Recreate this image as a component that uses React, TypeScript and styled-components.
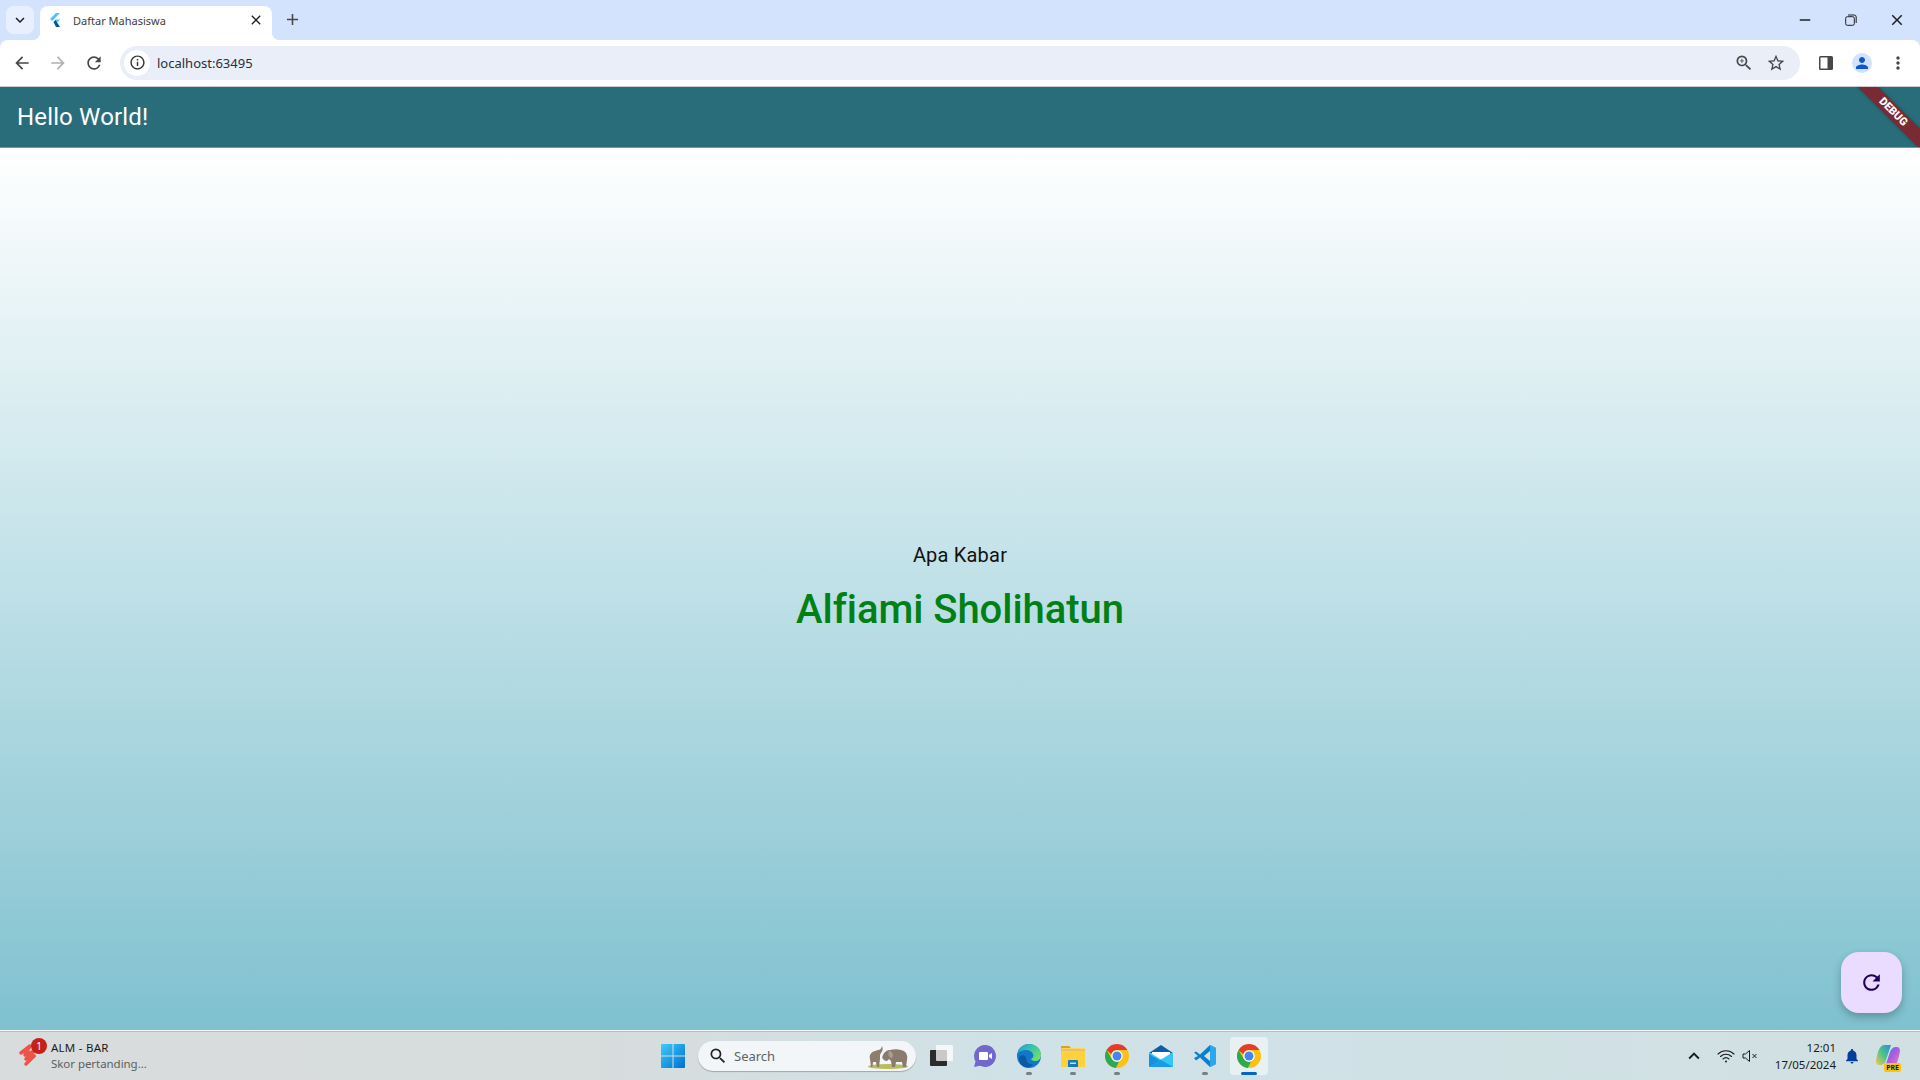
import styled, { createGlobalStyle } from "styled-components";
import {
  MdAdd,
  MdArrowBack,
  MdArrowForward,
  MdClose,
  MdInfoOutline,
  MdKeyboardArrowDown,
  MdKeyboardArrowUp,
  MdMoreVert,
  MdNotifications,
  MdOutlineStarBorder,
  MdPerson,
  MdRefresh,
  MdRemove,
  MdSearch,
  MdZoomIn,
} from "react-icons/md";

const GlobalStyle = createGlobalStyle`
  html, body, #root {
    margin: 0;
    height: 100%;
    overflow: hidden;
  }

  body {
    font-family: "Noto Sans", "Open Sans", sans-serif;
  }
`;

const Page = styled.div`
  width: 1920px;
  height: 1080px;
  display: flex;
  flex-direction: column;
  background: #d3e3fd;
`;

const TabStrip = styled.div`
  height: 40px;
  flex: none;
  display: flex;
  align-items: flex-end;
  padding-left: 6px;
  color: #1f1f1f;
`;

const TabSearchButton = styled.div`
  width: 28px;
  height: 28px;
  margin-bottom: 6px;
  border-radius: 8px;
  background: #e8f0fe;
  display: flex;
  align-items: center;
  justify-content: center;
  font-size: 18px;
`;

const Tab = styled.div`
  position: relative;
  width: 232px;
  height: 34px;
  margin-left: 6px;
  padding: 0 8px 6px 9px;
  box-sizing: border-box;
  background: #ffffff;
  border-radius: 8px 8px 0 0;
  display: flex;
  align-items: center;
  font-size: 11px;

  &::before,
  &::after {
    content: "";
    position: absolute;
    bottom: 0;
    width: 8px;
    height: 8px;
  }

  &::before {
    left: -8px;
    background: radial-gradient(circle at 0 0, transparent 8px, #ffffff 8.5px);
  }

  &::after {
    right: -8px;
    background: radial-gradient(circle at 100% 0, transparent 8px, #ffffff 8.5px);
  }
`;

const TabTitle = styled.span`
  flex: 1;
  margin-left: 12px;
  color: #3c4043;
`;

const NewTabButton = styled.div`
  margin: 0 0 8px 9px;
  width: 22px;
  height: 26px;
  display: flex;
  align-items: center;
  justify-content: center;
  font-size: 19px;
  color: #474747;
`;

const WindowControls = styled.div`
  margin-left: auto;
  align-self: flex-start;
  display: flex;
  height: 40px;
  color: #1f1f1f;
`;

const WindowButton = styled.div`
  width: 46px;
  height: 40px;
  display: flex;
  align-items: center;
  justify-content: center;
  font-size: 18px;
`;

const Toolbar = styled.div`
  height: 47px;
  flex: none;
  box-sizing: border-box;
  background: #ffffff;
  border-radius: 8px 8px 0 0;
  border-bottom: 1px solid #c9cbcc;
  display: flex;
  align-items: center;
  padding: 0 4px 1px 4px;
`;

const NavButton = styled.div<{ $dim?: boolean }>`
  width: 36px;
  height: 36px;
  flex: none;
  display: flex;
  align-items: center;
  justify-content: center;
  font-size: 20px;
  color: ${({ $dim }) => ($dim ? "#b1b1b1" : "#474747")};
`;

const AddressBar = styled.div`
  width: 1680px;
  height: 34px;
  margin: 0 8px;
  flex: none;
  box-sizing: border-box;
  padding: 0 8px 0 4px;
  border-radius: 17px;
  background: #e9eef8;
  display: flex;
  align-items: center;
  color: #474747;
`;

const SiteInfo = styled.div`
  width: 26px;
  height: 26px;
  border-radius: 50%;
  background: #ffffff;
  display: flex;
  align-items: center;
  justify-content: center;
  font-size: 17px;
  color: #333333;
`;

const Url = styled.span`
  flex: 1;
  margin-left: 7px;
  font-size: 13px;
  color: #26303c;
`;

const AddressAction = styled.div`
  width: 32px;
  display: flex;
  justify-content: center;
  font-size: 20px;
`;

const ToolbarIcons = styled.div`
  display: flex;
  align-items: center;
`;

const Avatar = styled.div`
  width: 20px;
  height: 20px;
  border-radius: 50%;
  background: #d3e3fd;
  display: flex;
  align-items: center;
  justify-content: center;
  color: #0b57d0;
  font-size: 18px;
`;

const AppBar = styled.header`
  position: relative;
  height: 61px;
  flex: none;
  box-sizing: border-box;
  padding-left: 17px;
  background: #296d7a;
  border-bottom: 1px solid #6d9ba4;
  overflow: hidden;
  display: flex;
  align-items: center;
  color: #ffffff;
  font-family: Roboto, sans-serif;
  font-size: 24px;
  letter-spacing: 0.15px;
`;

const DebugBanner = styled.div`
  position: absolute;
  top: 18px;
  right: -18px;
  width: 90px;
  height: 14px;
  background: #7a2a32;
  box-shadow: 0 0 4px rgba(0, 0, 0, 0.35);
  transform: rotate(45deg);
  color: #ffffff;
  font-family: Roboto, sans-serif;
  font-size: 11px;
  font-weight: 900;
  letter-spacing: 0;
  line-height: 14px;
  text-align: center;
`;

const Body = styled.main`
  position: relative;
  flex: 1;
  display: flex;
  flex-direction: column;
  align-items: center;
  justify-content: center;
  gap: 13px;
  background: linear-gradient(to bottom, #ffffff, #7fc1cf);
  font-family: Roboto, sans-serif;
`;

const Greeting = styled.div`
  font-size: 20px;
  line-height: 28px;
  color: #111111;
  letter-spacing: 0.2px;
`;

const Name = styled.div`
  font-size: 40px;
  line-height: 56px;
  font-weight: 500;
  letter-spacing: -0.05px;
  color: #008015;
`;

const Fab = styled.div`
  position: absolute;
  right: 18px;
  bottom: 17px;
  width: 61px;
  height: 61px;
  border-radius: 18px;
  background: #eadcff;
  box-shadow: 0 4px 8px rgba(0, 0, 0, 0.25);
  display: flex;
  align-items: center;
  justify-content: center;
  color: #21005d;
  font-size: 25px;
`;

const Taskbar = styled.footer`
  height: 49px;
  flex: none;
  display: flex;
  align-items: center;
  border-top: 1px solid #f4f7f7;
  box-shadow: inset 0 1px 0 #b9bfbf;
  background: linear-gradient(to right, #d9dcdc 0%, #d7dcdc 30%, #cfe2e8 55%, #d1e0e2 100%);
`;

const Widget = styled.div`
  width: 651px;
  flex: none;
  box-sizing: border-box;
  padding-left: 16px;
  display: flex;
  align-items: center;
  gap: 10px;
`;

const WidgetLogo = styled.div`
  position: relative;
  width: 25px;
  height: 28px;
`;

const WidgetBadge = styled.span`
  position: absolute;
  top: -4px;
  right: -6px;
  width: 16px;
  height: 16px;
  border-radius: 50%;
  background: #c4211b;
  color: #ffffff;
  font-size: 10px;
  line-height: 16px;
  text-align: center;
`;

const WidgetText = styled.div`
  display: flex;
  flex-direction: column;
  font-size: 11.5px;
  line-height: 16px;
  letter-spacing: 0.25px;
  color: #1b1b1b;
`;

const WidgetSub = styled.span`
  color: #5c6060;
  letter-spacing: -0.05px;
`;

const TaskButton = styled.div<{ $active?: boolean; $running?: boolean }>`
  position: relative;
  width: 38px;
  height: 38px;
  margin: 0 3px;
  flex: none;
  border-radius: 4px;
  display: flex;
  align-items: center;
  justify-content: center;
  background: ${({ $active }) => ($active ? "rgba(255, 255, 255, 0.5)" : "transparent")};

  &::after {
    content: "";
    display: ${({ $active, $running }) => ($active || $running ? "block" : "none")};
    position: absolute;
    bottom: 0;
    left: 50%;
    transform: translateX(-50%);
    width: ${({ $active }) => ($active ? "16px" : "6px")};
    height: 3px;
    border-radius: 2px;
    background: ${({ $active }) => ($active ? "#0067c0" : "#7b7f80")};
  }
`;

const SearchBox = styled.div`
  width: 218px;
  height: 30px;
  margin: 0 3px;
  flex: none;
  box-sizing: border-box;
  padding: 0 6px 0 10px;
  border-radius: 15px;
  background: #f2f6f8;
  box-shadow: 0 1px 1px rgba(0, 0, 0, 0.25);
  display: flex;
  align-items: center;
  gap: 6px;
  color: #5f6364;
  font-size: 13px;
`;

const SearchLabel = styled.span`
  flex: 1;
`;

const TaskIcons = styled.div`
  display: flex;
  align-items: center;
`;

const Tray = styled.div`
  margin-left: auto;
  display: flex;
  align-items: center;
  padding-right: 20px;
  color: #1b1b1b;
`;

const TrayIcon = styled.div<{ $width: number }>`
  width: ${({ $width }) => $width}px;
  display: flex;
  justify-content: center;
  font-size: 18px;
`;

const Clock = styled.div`
  width: 76px;
  margin-right: 4px;
  text-align: right;
  font-size: 11.5px;
  line-height: 17px;
`;

const PreBadge = styled.span`
  position: absolute;
  right: -1px;
  bottom: -4px;
  padding: 0 2px;
  border-radius: 2px;
  background: #f5c518;
  color: #1b1b1b;
  font-size: 7px;
  font-weight: 700;
  line-height: 9px;
`;

const Copilot = styled.div`
  position: relative;
  width: 24px;
  height: 24px;
  margin-left: 12px;
`;

function FlutterIcon() {
  return (
    <svg width="12" height="14" viewBox="0 0 12 14">
      <path d="M7 0h4L3 8 1 6z" fill="#47c5fb" />
      <path d="M7 6.5h4L6.5 11 4.500 9z" fill="#47c5fb" />
      <path d="M4.500 9l2-2 4.500 7H7z" fill="#00569e" />
    </svg>
  );
}

function RestoreIcon() {
  return (
    <svg width="12" height="12" viewBox="0 0 12 12" fill="none" stroke="#1f1f1f">
      <rect x="0.7" y="2.7" width="8.6" height="8.6" rx="1.6" />
      <path d="M3 1h6.200A2 2 0 0 1 11.200 3v6" />
    </svg>
  );
}

function SidePanelIcon() {
  return (
    <svg width="16" height="16" viewBox="0 0 16 16">
      <rect x="1" y="1" width="14" height="14" rx="1.500" fill="#474747" />
      <rect x="2.500" y="2.500" width="7" height="11" fill="#ffffff" />
    </svg>
  );
}

function AlmLogo() {
  return (
    <svg width="25" height="28" viewBox="0 0 25 28" fill="none" stroke="#f0524a" strokeWidth="3.500" strokeLinecap="round" strokeLinejoin="round">
      <path d="M5 11L14 4L9 13L18 9L10 17L18 14" />
      <path d="M18 14L10 22" />
    </svg>
  );
}

function WindowsLogo() {
  return (
    <svg width="24" height="24" viewBox="0 0 24 24">
      <defs>
        <linearGradient id="win" x1="0" y1="0" x2="1" y2="1">
          <stop offset="0" stopColor="#3ccbfb" />
          <stop offset="1" stopColor="#0070d0" />
        </linearGradient>
      </defs>
      <path d="M0 1a1 1 0 0 1 1-1h10.500v11.500H0zM12.500 0H23a1 1 0 0 1 1 1v10.500H12.500zM0 12.500h11.500V24H1a1 1 0 0 1-1-1zM12.500 12.500H24V23a1 1 0 0 1-1 1H12.500z" fill="url(#win)" />
    </svg>
  );
}

function Elephants() {
  return (
    <svg width="44" height="26" viewBox="0 0 44 26">
      <ellipse cx="22" cy="23.500" rx="20" ry="2.500" fill="#b9bd60" />
      <path d="M5 24l-1-8c-1-4 1-7 5-8l3-1c2 0 3-1 4-4 1 2 1 5-1 7l-1 2v4l-1 8h-2l-1-5H7l-0.500 5z" fill="#8e7d6f" />
      <path d="M17 12c1-3 4-5 7-5 4-1 8-1 11 0 5 1 7 5 6 10l-1 7h-3l-1-5-6 0-1 5h-3l-1-6-2-2-2 2c-2 0-3-1-4-2-1-1-1-2 0-4z" fill="#8a7b6e" />
      <path d="M23 8c2 0 4 2 4 4s-1 3-2 3-4-3-2-7z" fill="#ac9c8e" />
    </svg>
  );
}

function TaskViewIcon() {
  return (
    <svg width="24" height="24" viewBox="0 0 24 24">
      <rect x="1" y="6" width="17" height="16" rx="1" fill="#2b2b2b" />
      <rect x="7" y="1" width="17" height="16" rx="1" fill="#ffffff" fillOpacity="0.75" />
    </svg>
  );
}

function ChatIcon() {
  return (
    <svg width="24" height="24" viewBox="0 0 24 24">
      <path d="M12 1a11 11 0 1 1-5 20.800L1 23l1.500-5.500A11 11 0 0 1 12 1z" fill="#7068cc" />
      <path d="M6 9a1 1 0 0 1 1-1h7a1 1 0 0 1 1 1v6a1 1 0 0 1-1 1H7a1 1 0 0 1-1-1zM16 11l3-2v6l-3-2z" fill="#ffffff" />
    </svg>
  );
}

function EdgeIcon() {
  return (
    <svg width="24" height="24" viewBox="0 0 24 24">
      <defs>
        <linearGradient id="edgeA" x1="0" y1="0" x2="1" y2="0.8">
          <stop offset="0" stopColor="#1f9fd8" />
          <stop offset="0.6" stopColor="#3fcf9a" />
          <stop offset="1" stopColor="#7ee05a" />
        </linearGradient>
      </defs>
      <circle cx="12" cy="12" r="12" fill="#1277c9" />
      <path d="M1 9C3 3 7 0 12 0c7 0 12 5 12 11 0 4-3 6-6 6-2 0-4-1-4-2 2-1 3-3 2-5C14 6 7 4 1 9z" fill="url(#edgeA)" />
      <path d="M9 13c0 5 3 8 7 7-2 3-5 4-8 3-4-1-6-5-6-9 1-3 4-4 7-1z" fill="#0a5aa3" />
    </svg>
  );
}

function FolderIcon() {
  return (
    <svg width="24" height="22" viewBox="0 0 24 22">
      <path d="M0 2a1 1 0 0 1 1-1h7l3 3H0z" fill="#d9a21c" />
      <rect x="0" y="3" width="24" height="19" rx="1" fill="#fcd462" />
      <rect x="0" y="4" width="24" height="3" fill="#e9c06a" />
      <rect x="0" y="6" width="24" height="16" rx="1" fill="#fdd23a" />
      <path d="M7 16a1 1 0 0 1 1-1h8a1 1 0 0 1 1 1v6H7z" fill="#1478c4" />
      <rect x="9" y="17.500" width="6" height="1.500" fill="#bfe3f7" />
    </svg>
  );
}

function ChromeIcon() {
  return (
    <svg width="24" height="24" viewBox="0 0 48 48">
      <circle cx="24" cy="24" r="24" fill="#fbc116" />
      <path d="M24 0a24 24 0 0 1 20.800 12H24a12 12 0 0 0-11.400 8.300L3.200 12A24 24 0 0 1 24 0z" fill="#e33b2e" />
      <path d="M3.200 12L13.600 30A12 12 0 0 0 27.800 35.400L21.700 47.900A24 24 0 0 1 3.200 12z" fill="#2da94f" />
      <circle cx="24" cy="24" r="11.500" fill="#ffffff" />
      <circle cx="24" cy="24" r="9" fill="#4285f4" />
    </svg>
  );
}

function MailIcon() {
  return (
    <svg width="24" height="22" viewBox="0 0 24 22">
      <path d="M12 0l12 8v3H0V8z" fill="#0a5ea8" />
      <rect x="0" y="8" width="24" height="14" fill="#34c6f4" />
      <path d="M0 22V9l11 6.500z" fill="#1490df" />
      <path d="M3 7h18v2l-9 5.500L3 9z" fill="#ffffff" />
      <path d="M0 22l12-7 12 7z" fill="#1a9be6" />
    </svg>
  );
}

function VsCodeIcon() {
  return (
    <svg width="24" height="24" viewBox="0 0 24 24">
      <path d="M17 1l6 3v16l-6 3-10-9.500-4 3L1 14l4-2-4-3.500L3 7.500l4 3z" fill="#0f7fcc" />
      <path d="M17 7l-6 5 6 5z" fill="#cfe2e8" />
      <path d="M17 1l6 3v16l-6 3z" fill="#29a8ef" />
    </svg>
  );
}

function WifiIcon() {
  return (
    <svg width="18" height="14" viewBox="0 0 18 14" fill="none" stroke="#1b1b1b" strokeWidth="1.100" strokeLinecap="round">
      <path d="M1 5a11.500 11.500 0 0 1 16 0" />
      <path d="M3.500 7.500a8 8 0 0 1 11 0" />
      <path d="M6 10a4.500 4.500 0 0 1 6 0" />
      <circle cx="9" cy="12.500" r="1" fill="#1b1b1b" stroke="none" />
    </svg>
  );
}

function MuteIcon() {
  return (
    <svg width="18" height="18" viewBox="0 0 18 18" fill="none" stroke="#1b1b1b">
      <path d="M2 7h2.500L8.500 3.500v11L4.500 11H2z" />
      <path d="M11.500 7l4 4M15.500 7l-4 4" />
    </svg>
  );
}

function CopilotIcon() {
  return (
    <svg width="24" height="24" viewBox="0 0 24 24">
      <defs>
        <linearGradient id="copA" x1="0" y1="1" x2="1" y2="0">
          <stop offset="0" stopColor="#f9c74f" />
          <stop offset="0.5" stopColor="#4cc38a" />
          <stop offset="1" stopColor="#2c8de0" />
        </linearGradient>
        <linearGradient id="copB" x1="0" y1="0" x2="1" y2="1">
          <stop offset="0" stopColor="#2c7de0" />
          <stop offset="0.5" stopColor="#b05ce0" />
          <stop offset="1" stopColor="#f08bb0" />
        </linearGradient>
      </defs>
      <path d="M8 1h7l-5 15c-1 3-3 5-6 5H3c-2 0-3-2-3-4 1-6 3-16 8-16z" fill="url(#copA)" />
      <path d="M16 23H9l5-15c1-3 3-5 6-5h1c2 0 3 2 3 4-1 6-3 16-8 16z" fill="url(#copB)" />
    </svg>
  );
}

export default function App() {
  return (
    <Page>
      <GlobalStyle />
      <TabStrip>
        <TabSearchButton>
          <MdKeyboardArrowDown />
        </TabSearchButton>
        <Tab>
          <FlutterIcon />
          <TabTitle>Daftar Mahasiswa</TabTitle>
          <MdClose size={16} />
        </Tab>
        <NewTabButton>
          <MdAdd />
        </NewTabButton>
        <WindowControls>
          <WindowButton>
            <MdRemove />
          </WindowButton>
          <WindowButton>
            <RestoreIcon />
          </WindowButton>
          <WindowButton>
            <MdClose />
          </WindowButton>
        </WindowControls>
      </TabStrip>

      <Toolbar>
        <NavButton>
          <MdArrowBack />
        </NavButton>
        <NavButton $dim>
          <MdArrowForward />
        </NavButton>
        <NavButton>
          <MdRefresh />
        </NavButton>
        <AddressBar>
          <SiteInfo>
            <MdInfoOutline />
          </SiteInfo>
          <Url>localhost:63495</Url>
          <AddressAction>
            <MdZoomIn />
          </AddressAction>
          <AddressAction>
            <MdOutlineStarBorder />
          </AddressAction>
        </AddressBar>
        <ToolbarIcons>
          <NavButton>
            <SidePanelIcon />
          </NavButton>
          <NavButton>
            <Avatar>
              <MdPerson />
            </Avatar>
          </NavButton>
          <NavButton>
            <MdMoreVert />
          </NavButton>
        </ToolbarIcons>
      </Toolbar>

      <AppBar>
        Hello World!
        <DebugBanner>DEBUG</DebugBanner>
      </AppBar>

      <Body>
        <Greeting>Apa Kabar</Greeting>
        <Name>Alfiami Sholihatun</Name>
        <Fab>
          <MdRefresh />
        </Fab>
      </Body>

      <Taskbar>
        <Widget>
          <WidgetLogo>
            <AlmLogo />
            <WidgetBadge>1</WidgetBadge>
          </WidgetLogo>
          <WidgetText>
            <span>ALM - BAR</span>
            <WidgetSub>Skor pertanding...</WidgetSub>
          </WidgetText>
        </Widget>
        <TaskIcons>
          <TaskButton>
            <WindowsLogo />
          </TaskButton>
          <SearchBox>
            <MdSearch size={20} color="#222222" />
            <SearchLabel>Search</SearchLabel>
            <Elephants />
          </SearchBox>
          <TaskButton>
            <TaskViewIcon />
          </TaskButton>
          <TaskButton>
            <ChatIcon />
          </TaskButton>
          <TaskButton $running>
            <EdgeIcon />
          </TaskButton>
          <TaskButton $running>
            <FolderIcon />
          </TaskButton>
          <TaskButton $running>
            <ChromeIcon />
          </TaskButton>
          <TaskButton>
            <MailIcon />
          </TaskButton>
          <TaskButton $running>
            <VsCodeIcon />
          </TaskButton>
          <TaskButton $active>
            <ChromeIcon />
          </TaskButton>
        </TaskIcons>
        <Tray>
          <TrayIcon $width={36}>
            <MdKeyboardArrowUp size={22} />
          </TrayIcon>
          <TrayIcon $width={28}>
            <WifiIcon />
          </TrayIcon>
          <TrayIcon $width={20}>
            <MuteIcon />
          </TrayIcon>
          <Clock>
            12:01
            <br />
            17/05/2024
          </Clock>
          <TrayIcon $width={24}>
            <MdNotifications color="#003f9e" size={18} />
          </TrayIcon>
          <Copilot>
            <CopilotIcon />
            <PreBadge>PRE</PreBadge>
          </Copilot>
        </Tray>
      </Taskbar>
    </Page>
  );
}
